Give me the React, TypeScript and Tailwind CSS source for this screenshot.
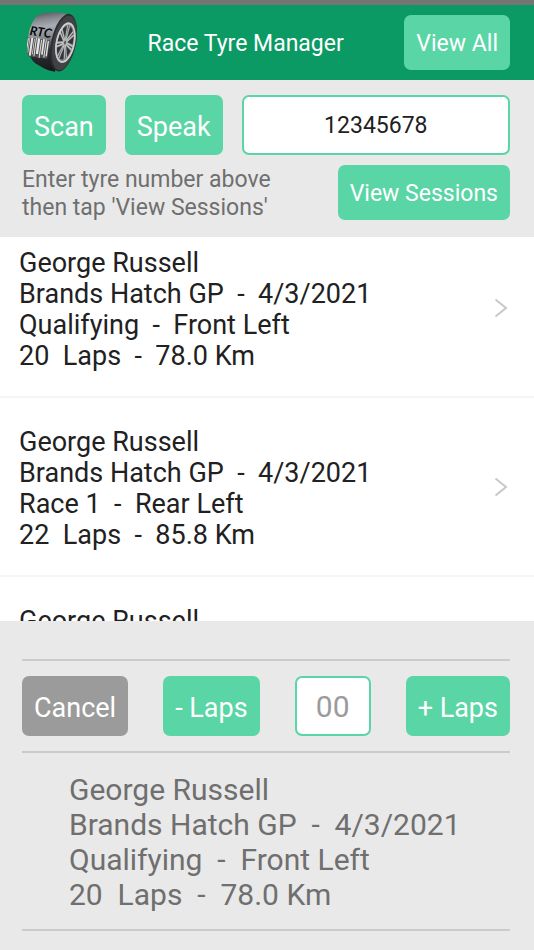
import React, { useState } from "react";

const FONT = "font-['Roboto','Liberation_Sans',sans-serif]";
const PRIMARY = "rounded-[7px] bg-[#5ad5a6] px-3 text-white whitespace-nowrap";

type Session = { driver: string; place?: string; run?: string; distance?: string };

const sessions: Session[] = [
  { driver: "George Russell", place: "Brands Hatch GP  -  4/3/2021", run: "Qualifying  -  Front Left", distance: "20  Laps  -  78.0 Km" },
  { driver: "George Russell", place: "Brands Hatch GP  -  4/3/2021", run: "Race 1  -  Rear Left", distance: "22  Laps  -  85.8 Km" },
  { driver: "George Russell" },
];

function SessionText({ session }: { session: Session }) {
  const lines = [session.driver, session.place, session.run, session.distance].filter(Boolean);
  return (
    <>
      {lines.map((line) => (
        <span key={line} className="block">{line}</span>
      ))}
    </>
  );
}

const bars = [
  [3, 3], [8, 2], [13, 6], [22, 2], [27, 3], [33, 7], [43, 3], [49, 5], [57, 3], [63, 4],
];
const spokes = [0, 51, 103, 154, 206, 257, 309];

function TyreLogo() {
  return (
    <svg viewBox="0 0 150 180" className="h-15 w-[50px]" role="img" aria-label="RTC tyre">
      <defs>
        <linearGradient id="tread" x1="0.3" y1="0" x2="0.4" y2="1">
          <stop offset="0" stopColor="#55575b" />
          <stop offset="0.12" stopColor="#85888e" />
          <stop offset="0.25" stopColor="#a9acb2" />
          <stop offset="0.45" stopColor="#85878c" />
          <stop offset="0.65" stopColor="#303134" />
          <stop offset="1" stopColor="#17181a" />
        </linearGradient>
        <linearGradient id="rim" x1="0" y1="0" x2="1" y2="1">
          <stop offset="0" stopColor="#f0f0f0" />
          <stop offset="0.5" stopColor="#9c9ea0" />
          <stop offset="1" stopColor="#dedede" />
        </linearGradient>
      </defs>
      <path d="M118 5C88-1 48 1 33 9C12 27 1 66 2 99C3 124 12 144 25 154C45 167 66 178 84 179Z" fill="url(#tread)" />
      <g transform="rotate(12 110 92)">
        <ellipse cx="110" cy="92" rx="37" ry="88" fill="#2c2d30" />
        <ellipse cx="112" cy="92" rx="34" ry="83" fill="#414246" />
        <ellipse cx="115" cy="91" rx="29" ry="62" fill="url(#rim)" />
        <ellipse cx="115" cy="91" rx="25" ry="56" fill="#77797b" />
        <ellipse cx="114" cy="91" rx="23" ry="51" fill="#333437" />
        <g transform="translate(114 91) scale(0.45 0.94)">
          {spokes.map((angle) => (
            <path
              key={angle}
              d="M-5 0L-10-55L-3-55L0-16L3-55L10-55L5 0Z"
              transform={`rotate(${angle})`}
              fill="#c4c5c6"
              stroke="#8b8d8f"
              strokeWidth="1"
            />
          ))}
          <circle r="12" fill="#aeb0b2" />
          <circle r="6" fill="#505154" />
        </g>
        <ellipse cx="115" cy="91" rx="26" ry="58" fill="none" stroke="#cfcfce" strokeWidth="4" />
      </g>
      <g transform="rotate(8 4 76)">
        <path d="M2 76H69V132H12Q2 114 2 76Z" fill="#4c4d4e" />
        {bars.map(([x, width], index) => (
          <rect key={x} x={x} y={index % 3 === 0 ? 78 : 75} width={width} height={index % 2 ? 47 : 55} fill="#e5e5e4" />
        ))}
      </g>
      <text x="7" y="69" transform="rotate(8 7 69)" fontSize="38" fontWeight="700" fontStyle="italic" fill="#08090a" fontFamily="Lato, sans-serif">RTC</text>
    </svg>
  );
}

function Chevron() {
  return (
    <svg viewBox="0 0 14 20" className="h-5 w-3.5 shrink-0" fill="none" stroke="#c7c7cc" strokeWidth="2" aria-hidden="true">
      <path d="M1.5 1.5L12 10L1.5 18.5" />
    </svg>
  );
}

export default function App() {
  const [tyre, setTyre] = useState("12345678");
  const [laps, setLaps] = useState("");
  const [selected, setSelected] = useState(sessions[0]);
  const step = (by: number) => setLaps(String(Math.max(0, Number(laps) + by)).padStart(2, "0"));

  return (
    <div className={`flex h-screen flex-col bg-[#e9e9e9] ${FONT}`}>
      <header className="flex shrink-0 items-center justify-between border-t-5 border-[#757575] bg-[#0b9a64] pt-[7px] pr-6 pb-2 pl-[27px]">
        <TyreLogo />
        <h1 className="ml-2.5 pt-1 text-[23px] text-white">Race Tyre Manager</h1>
        <button className={`${PRIMARY} h-[55px] pt-1 text-[23px]`}>View All</button>
      </header>

      <section className="shrink-0 pt-[15px] pr-6 pb-[15px] pl-[22px]">
        <div className="flex gap-[19px]">
          <button className={`${PRIMARY} h-15 pt-1 text-[27px]`}>Scan</button>
          <button className={`${PRIMARY} h-15 pt-1 text-[27px]`}>Speak</button>
          <input
            aria-label="Tyre number"
            value={tyre}
            onChange={(event) => setTyre(event.target.value)}
            className="h-15 min-w-0 flex-1 rounded-[7px] border-2 border-[#5ad5a6] bg-white text-center text-[23px] text-[#212121] outline-none"
          />
        </div>
        <div className="mt-2.5 flex items-start justify-between">
          <p className="pt-px text-[23px]/[28px] text-[#6f6f6f]">
            Enter tyre number above
            <br />
            then tap 'View Sessions'
          </p>
          <button className={`${PRIMARY} h-[55px] pt-1 text-[23px]`}>View Sessions</button>
        </div>
      </section>

      <ul className="min-h-0 flex-1 overflow-y-auto bg-white [scrollbar-width:none]">
        {sessions.map((session, index) => (
          <li key={index} className="border-b-2 border-[#f5f5f5] first:-mt-[18px]">
            <button
              onClick={() => setSelected(session)}
              className="flex h-[177px] w-full items-center justify-between pr-[26px] pl-[19px] text-left text-[27px]/[31px] whitespace-pre text-[#212121]"
            >
              <span className="min-h-[128px] pt-1">
                <SessionText session={session} />
              </span>
              <Chevron />
            </button>
          </li>
        ))}
      </ul>

      <footer className="shrink-0 pt-[38px] pr-6 pb-[19px] pl-[22px]">
        <div className="flex items-center justify-between border-y-2 border-[#cbcbcb] py-[15px]">
          <button className="h-15 rounded-[7px] bg-[#9b9b9b] px-3 pt-1 text-[27px] text-white">Cancel</button>
          <button onClick={() => step(-1)} className={`${PRIMARY} h-15 pt-1 text-[27px]`}>- Laps</button>
          <input
            aria-label="Laps"
            placeholder="00"
            value={laps}
            onChange={(event) => setLaps(event.target.value)}
            className="h-15 w-19 rounded-[7px] border-2 border-[#5ad5a6] bg-white text-center text-[30px] text-[#212121] outline-none placeholder:text-[#9b9b9b]"
          />
          <button onClick={() => step(1)} className={`${PRIMARY} h-15 pt-1 text-[27px]`}>+ Laps</button>
        </div>
        <p className="border-b-2 border-[#cbcbcb] pt-[19px] pb-[17px] pl-[47px] text-[30px]/[35px] whitespace-pre text-[#6f6f6f]">
          <SessionText session={selected} />
        </p>
      </footer>
    </div>
  );
}
